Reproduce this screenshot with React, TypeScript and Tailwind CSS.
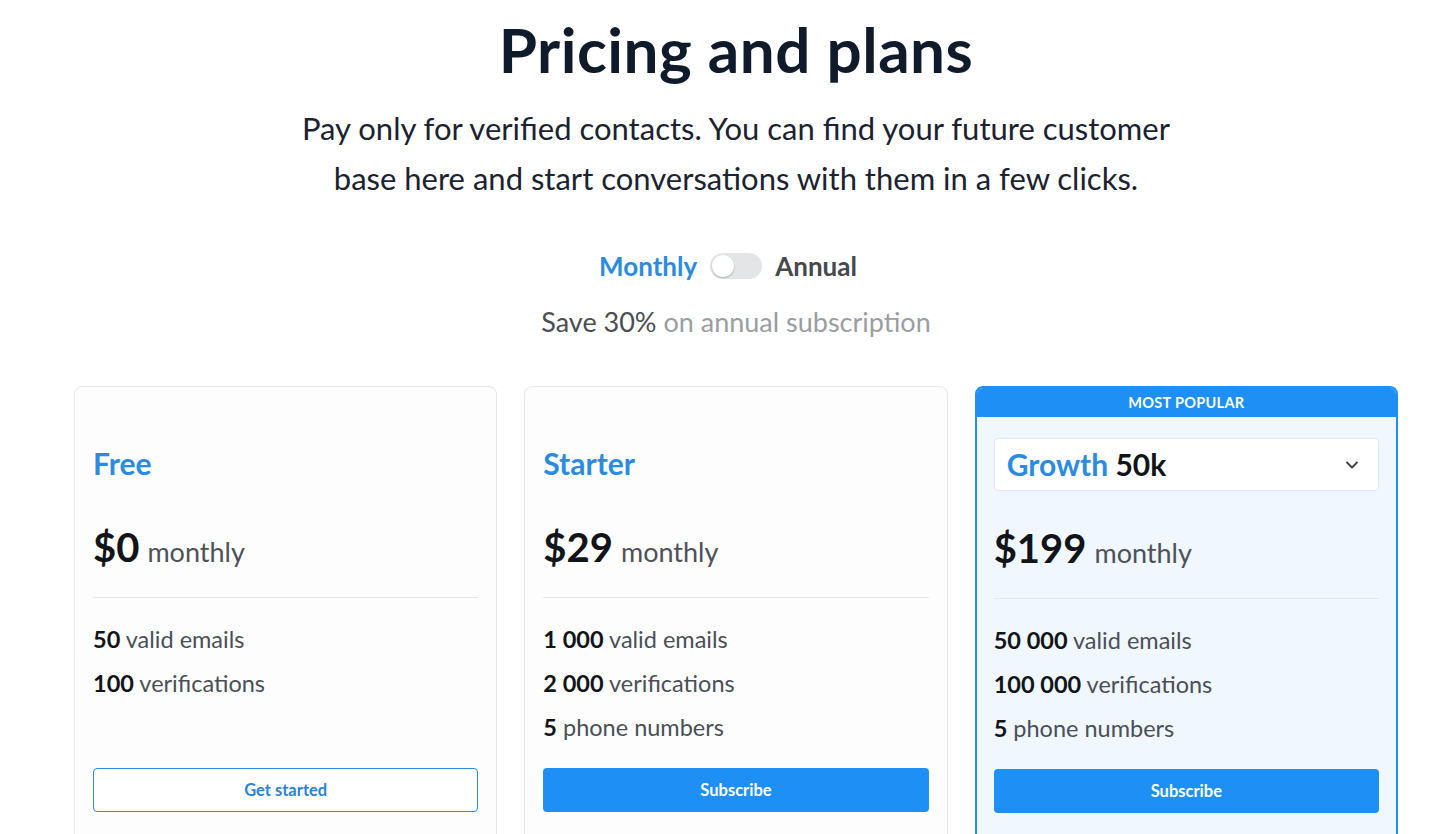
import { ChevronDown } from "lucide-react";

const plans = [
  {
    name: "Free",
    price: "$0",
    features: [
      ["50", "valid emails"],
      ["100", "verifications"],
    ],
    cta: "Get started",
    outline: true,
  },
  {
    name: "Starter",
    price: "$29",
    features: [
      ["1 000", "valid emails"],
      ["2 000", "verifications"],
      ["5", "phone numbers"],
    ],
    cta: "Subscribe",
  },
  {
    name: "Growth",
    tier: "50k",
    price: "$199",
    popular: true,
    features: [
      ["50 000", "valid emails"],
      ["100 000", "verifications"],
      ["5", "phone numbers"],
    ],
    cta: "Subscribe",
  },
];

export default function App() {
  return (
    <div className="min-h-screen bg-white pl-[32px] font-['Lato','Noto_Sans',sans-serif] text-[#0f1a2b]">
      <div className="flex flex-col items-center pt-[12px]">
        <h1 className="text-[62px] font-bold leading-[74px] tracking-[0.5px]">Pricing and plans</h1>
        <p className="mt-[17px] max-w-[960px] text-center text-[31px] leading-[50px] text-[#1b2230]">
          Pay only for verified contacts. You can find your future customer
          <br />
          base here and start conversations with them in a few clicks.
        </p>

        <div className="mr-[16px] mt-[46px] flex h-[34px] items-center gap-[13px] text-[26px] font-bold">
          <span className="text-[#2b8be0]">Monthly</span>
          <button className="flex h-[26px] w-[52px] items-center rounded-full bg-[#e4e5e7] px-[2px]">
            <span className="h-[22px] w-[22px] rounded-full bg-white shadow-[0_1px_2px_rgba(0,0,0,0.25)]" />
          </button>
          <span className="text-[#45484d]">Annual</span>
        </div>
        <p className="mt-[21px] text-[27px] leading-[36px] text-[#9a9da2]">
          <span className="text-[#4a4d52]">Save 30%</span> on annual subscription
        </p>
      </div>

      <div className="mx-auto mt-[46px] grid w-[1324px] grid-cols-3 gap-[27px]">
        {plans.map((p) => (
          <div
            key={p.name}
            className={`overflow-hidden rounded-lg pb-[48px] ${
              p.popular ? "border-2 border-[#1e8ff5] bg-[#f1f7fe]" : "border border-[#e3e6ea] bg-[#fdfdfe]"
            }`}
          >
            <div
              className={`flex h-[29px] items-center justify-center text-[14.5px] font-bold tracking-[0.3px] text-white ${
                p.popular ? "bg-[#1e8ff5]" : ""
              }`}
            >
              {p.popular ? "MOST POPULAR" : ""}
            </div>
            <div className={`${p.popular ? "px-[17px]" : "px-[18px]"} pt-[21px]`}>
              {p.tier ? (
                <div className="flex h-[53px] items-center justify-between rounded border border-[#e3e6ea] bg-white pl-[12px] pr-[16px]">
                  <span className="text-[30px] font-bold">
                    <span className="text-[#2b8be0]">{p.name}</span> <span className="text-[#111418]">{p.tier}</span>
                  </span>
                  <ChevronDown className="h-5 w-5 text-[#3d4148]" strokeWidth={2.2} />
                </div>
              ) : (
                <div className="flex h-[53px] items-center text-[30px] font-bold text-[#2b8be0]">{p.name}</div>
              )}

              <div className="mt-[33px] flex h-[48px] items-baseline gap-[8px] leading-[48px]">
                <span className="text-[40px] font-bold text-[#111418]">{p.price}</span>
                <span className="text-[27px] text-[#4d5158]">monthly</span>
              </div>

              <div className="mt-[26px] border-t border-[#e3e6ea] pt-[19px]">
                <div className="min-h-[132px]">
                  {p.features.map(([n, t]) => (
                    <div key={t} className="text-[23.5px] leading-[44px] text-[#4a4f57]">
                      <span className="font-bold text-[#111418]">{n}</span> {t}
                    </div>
                  ))}
                </div>
              </div>

              <button
                className={`mt-[19px] flex h-[44px] w-full items-center justify-center rounded text-[16.5px] font-bold ${
                  p.outline ? "border border-[#2b8be0] bg-white text-[#2b82d4]" : "bg-[#1e8ff5] text-white"
                }`}
              >
                {p.cta}
              </button>
            </div>
          </div>
        ))}
      </div>
    </div>
  );
}
